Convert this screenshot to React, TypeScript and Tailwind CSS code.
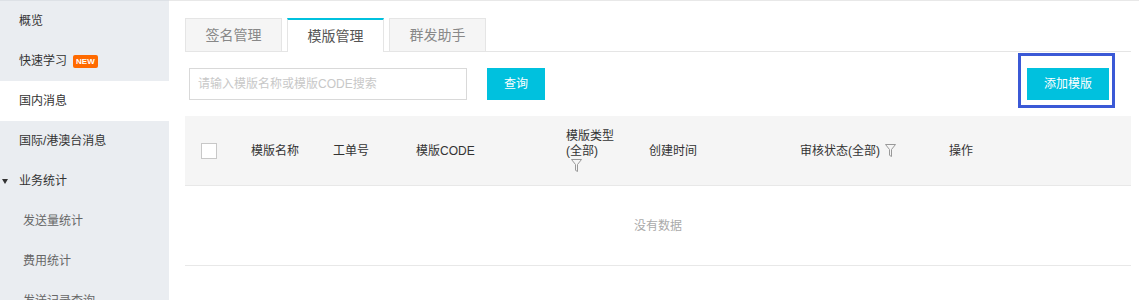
import React from 'react';

const font = { fontFamily: '"Liberation Sans", "Noto Sans CJK SC", sans-serif' };

function Funnel({ className }: { className?: string }) {
  return (
    <svg className={className} width="11" height="13" viewBox="0 0 11 13" fill="none">
      <path d="M0.5 0.5h10L6.5 5.5v7l-2-1.2V5.5z" stroke="#999" strokeWidth="1" strokeLinejoin="round" />
    </svg>
  );
}

function Sidebar() {
  return (
    <div className="w-[169px] shrink-0 bg-[#eaedf1] text-xs text-[#333] border-t border-[#dde1e6]">
      <div className="h-10 flex items-center pl-[19px]">概览</div>
      <div className="h-10 flex items-center pl-[19px]">
        快速学习
        <span className="ml-[6px] h-[13px] px-[3px] rounded-[2px] bg-[#ff6a00] text-white text-[8px] font-bold leading-[13px]">NEW</span>
      </div>
      <div className="h-10 flex items-center pl-[19px] bg-white">国内消息</div>
      <div className="h-10 flex items-center pl-[19px]">国际/港澳台消息</div>
      <div className="h-10 flex items-center relative pl-[19px]">
        <span className="absolute left-[2px] top-[18px] w-0 h-0 border-l-[3.5px] border-r-[3.5px] border-t-[5px] border-l-transparent border-r-transparent border-t-[#333]" />
        业务统计
      </div>
      <div className="h-10 flex items-center pl-[23px] text-[#666]">发送量统计</div>
      <div className="h-10 flex items-center pl-[23px] text-[#666]">费用统计</div>
      <div className="h-10 flex items-center pl-[23px] text-[#666]">发送记录查询</div>
    </div>
  );
}

const tabs = ['签名管理', '模版管理', '群发助手'];

export default function App() {
  return (
    <div className="flex h-[300px] overflow-hidden bg-white" style={font}>
      <Sidebar />
      <div className="flex-1 border-t border-[#e8e8e8] pl-4 pr-2 pt-[17px]">
        {/* tabs */}
        <div className="flex gap-[5px] border-b border-[#e5e5e5] h-[34px]">
          {tabs.map((t, i) =>
            i === 1 ? (
              <div
                key={t}
                className="w-[97px] h-[34px] -mb-px bg-white border-x border-[#e5e5e5] border-t-2 border-t-[#00c1de] flex items-center justify-center text-sm text-[#555]"
              >
                {t}
              </div>
            ) : (
              <div
                key={t}
                className="w-[97px] h-[33px] bg-[#f5f5f5] border border-b-0 border-[#e5e5e5] flex items-center justify-center text-sm text-[#888]"
              >
                {t}
              </div>
            )
          )}
        </div>

        {/* search row */}
        <div className="flex items-center mt-4 pl-1 pr-[22px]">
          <div className="w-[278px] h-8 border border-[#d9d9d9] flex items-center pl-[8px] text-xs text-[#c8c8c8]">
            请输入模版名称或模版CODE搜索
          </div>
          <button className="ml-5 w-[58px] h-8 bg-[#00c1de] text-white text-xs">查询</button>
          <div className="flex-1" />
          <div className="relative">
            <span className="absolute -left-[9px] -right-[6px] -top-[15px] -bottom-[8px] border-[3px] border-[#3b59d6]" />
            <button className="relative w-[82px] h-8 bg-[#00c1de] text-white text-xs">添加模版</button>
          </div>
        </div>

        {/* table */}
        <div className="mt-4">
          <div className="grid grid-cols-[66px_82px_83px_150px_83px_151px_149px_1fr] items-center h-[70px] bg-[#f5f5f5] border-b border-[#e8e8e8] text-xs text-[#333]">
            <div className="pl-4">
              <div className="w-4 h-4 bg-white border border-[#c8c8c8]" />
            </div>
            <div>模版名称</div>
            <div>工单号</div>
            <div>模版CODE</div>
            <div className="leading-[15px]">
              <div>模版类型</div>
              <div>(全部)</div>
              <Funnel className="ml-[5px]" />
            </div>
            <div>创建时间</div>
            <div className="flex items-center">
              审核状态(全部)
              <Funnel className="ml-[5px]" />
            </div>
            <div>操作</div>
          </div>
          <div className="h-[80px] flex items-center justify-center border-b border-[#e8e8e8] text-xs text-[#aaa]">
            没有数据
          </div>
        </div>
      </div>
    </div>
  );
}
